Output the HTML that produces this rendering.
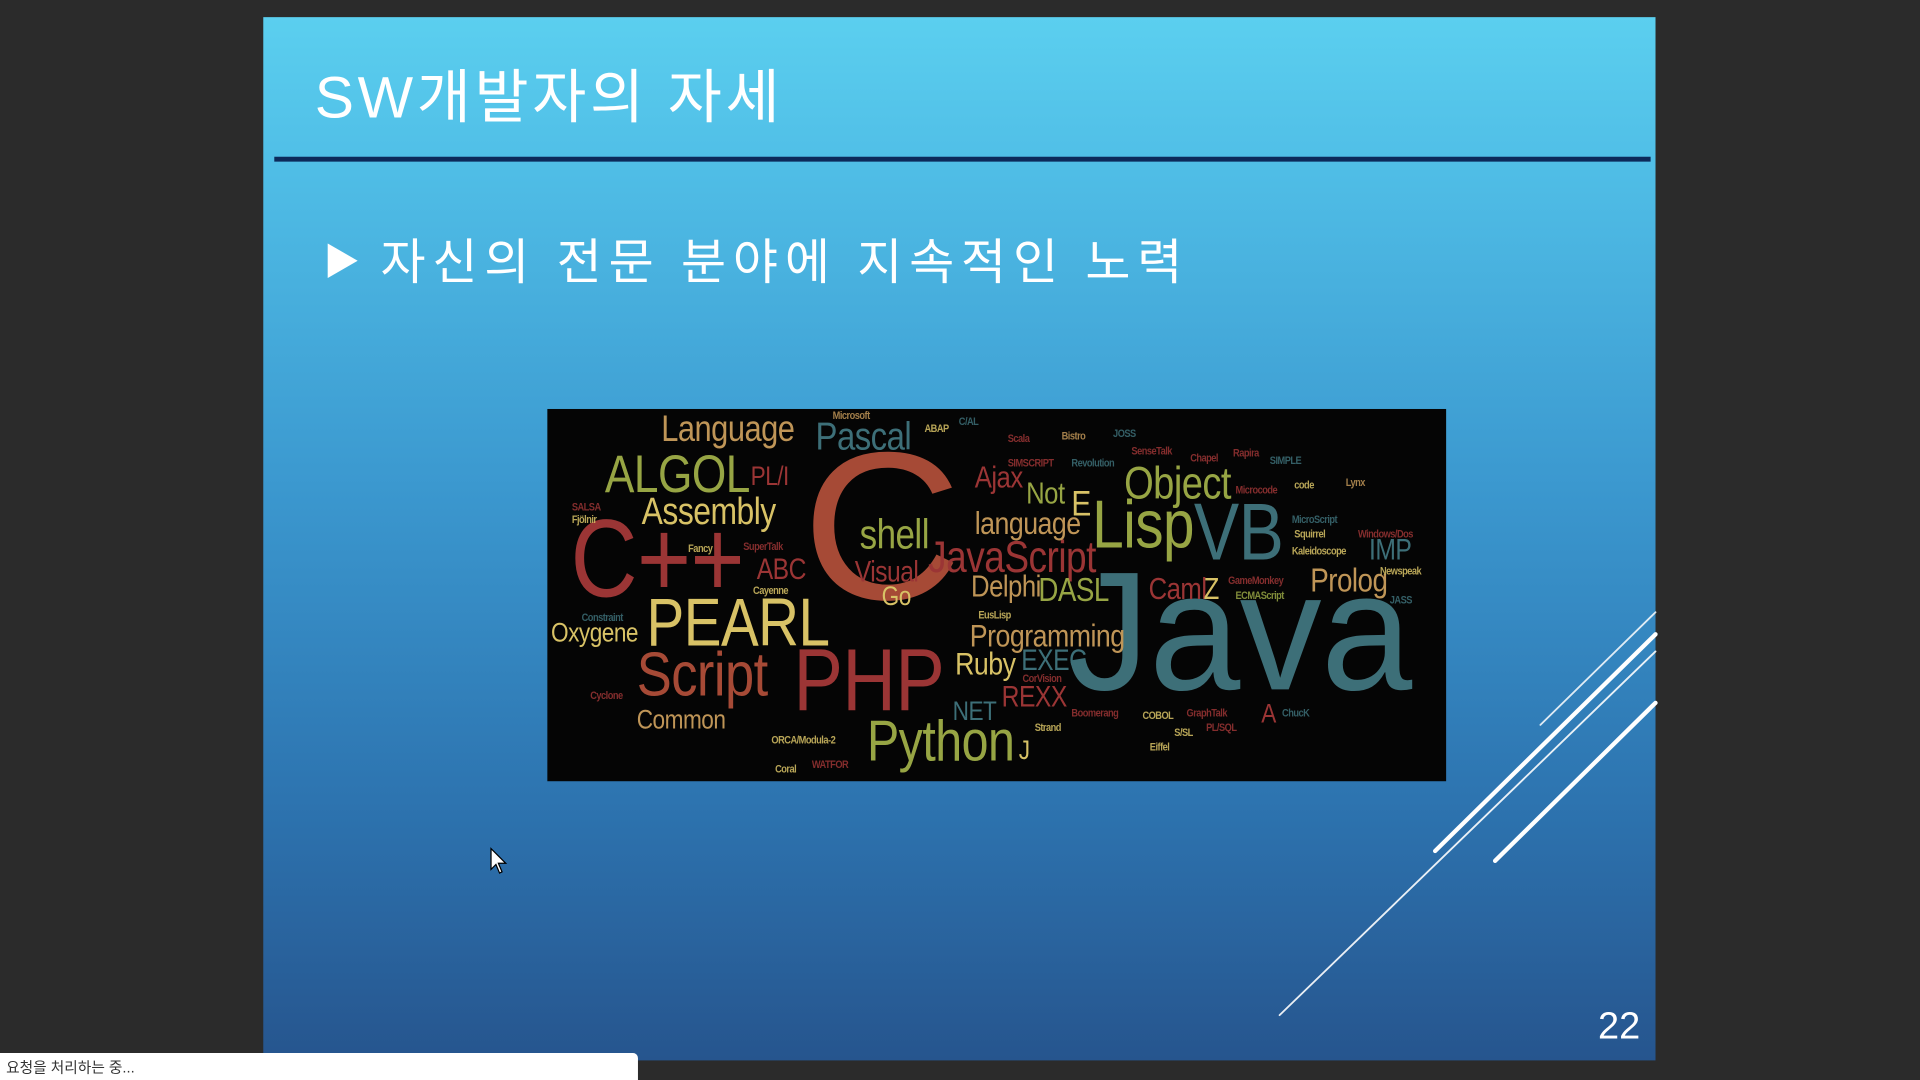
<!DOCTYPE html>
<html><head><meta charset="utf-8"><style>
html,body{margin:0;padding:0;background:#2b2b2b;overflow:hidden;width:1920px;height:1080px}
#s{position:absolute;left:0;top:0;width:1568px;height:882px;transform:scale(1.22449);transform-origin:0 0;font-family:"Liberation Sans","Noto Sans CJK KR",sans-serif}
.slide{position:absolute;left:215px;top:14px;width:1137px;height:852px;background:linear-gradient(180deg,#5bcfef 0%,#4fbde6 15%,#3b98cf 45%,#2d74b0 75%,#26558e 100%)}
.t{position:absolute;color:#fff;white-space:nowrap}
.img{position:absolute;left:447px;top:334px;width:734px;height:304px;background:#050505;overflow:hidden}
.w{position:absolute;line-height:1;white-space:nowrap;transform:scaleX(.84);transform-origin:0 0;letter-spacing:-0.5px}
.s{font-size:9px;font-weight:bold;opacity:.85}
.tan{color:#bf9557}.teal{color:#3d6f78}.ol{color:#97a544}.ye{color:#d8c266}.re{color:#9b3535}.ru{color:#a64a36}
</style></head><body><div id="s">
<div class="slide"></div>
<div class="t" style="left:257px;top:40px;font-size:48px;letter-spacing:3px">SW개발자의 자세</div>
<div style="position:absolute;left:224px;top:128px;width:1124px;height:4px;background:#0c2a5a"></div>
<div class="t" style="left:264px;top:182px;font-size:40px;letter-spacing:5.6px"><span style="font-size:30px;position:relative;top:-4px;letter-spacing:0">▶</span> 자신의 전문 분야에 지속적인 노력</div>
<div class="t" style="left:1305px;top:820px;font-size:31px">22</div>
<svg style="position:absolute;left:0;top:0" width="1568" height="882">
<g stroke="#fff" stroke-linecap="round">
<line x1="1258" y1="592" x2="1352" y2="500" stroke-width="1.5" opacity=".85"/>
<line x1="1172" y1="695" x2="1352" y2="518" stroke-width="3.5"/>
<line x1="1045" y1="829" x2="1352" y2="532" stroke-width="1.5" opacity=".9"/>
<line x1="1221" y1="703" x2="1352" y2="574" stroke-width="3.5"/>
</g>
<path d="M401 693 L401 710 L405 706 L408 713 L410 712 L407 705 L413 705 Z" fill="#fff" stroke="#000" stroke-width="1"/>
</svg>
<div class="img">
<div class="w tan" style="left:93px;top:2px;font-size:30px">Language</div>
<div class="w teal" style="left:219px;top:6px;font-size:32px">Pascal</div>
<div class="w ol" style="left:47px;top:33px;font-size:43px">ALGOL</div>
<div class="w ye" style="left:77px;top:68px;font-size:31px">Assembly</div>
<div class="w ru" style="left:208px;top:10px;font-size:172px;transform:scaleX(1.05)">C</div>
<div class="w re" style="left:19px;top:78px;font-size:90px">C++</div>
<div class="w ye" style="left:81px;top:147px;font-size:55px">PEARL</div>
<div class="w ye" style="left:3px;top:172px;font-size:22px">Oxygene</div>
<div class="w ru" style="left:73px;top:191px;font-size:51px">Script</div>
<div class="w re" style="left:201px;top:186px;font-size:72px">PHP</div>
<div class="w tan" style="left:73px;top:243px;font-size:22px">Common</div>
<div class="w ol" style="left:261px;top:247px;font-size:47px">Python</div>
<div class="w ol" style="left:255px;top:86px;font-size:34px">shell</div>
<div class="w re" style="left:311px;top:103px;font-size:36px">JavaScript</div>
<div class="w tan" style="left:349px;top:80px;font-size:26px">language</div>
<div class="w re" style="left:349px;top:44px;font-size:25px">Ajax</div>
<div class="w ol" style="left:391px;top:57px;font-size:25px">Not</div>
<div class="w ye" style="left:428px;top:64px;font-size:29px">E</div>
<div class="w ol" style="left:471px;top:42px;font-size:37px">Object</div>
<div class="w ol" style="left:445px;top:67px;font-size:55px">Lisp</div>
<div class="w teal" style="left:528px;top:67px;font-size:66px">VB</div>
<div class="w teal" style="left:425px;top:113px;font-size:138px;transform:scaleX(.97)">Java</div>
<div class="w tan" style="left:346px;top:133px;font-size:25px">Delphi</div>
<div class="w ol" style="left:401px;top:135px;font-size:27px">DASL</div>
<div class="w tan" style="left:345px;top:172px;font-size:26px">Programming</div>
<div class="w ye" style="left:333px;top:195px;font-size:26px">Ruby</div>
<div class="w teal" style="left:387px;top:194px;font-size:24px">EXEC</div>
<div class="w re" style="left:371px;top:224px;font-size:24px">REXX</div>
<div class="w teal" style="left:331px;top:236px;font-size:22px">NET</div>
<div class="w tan" style="left:623px;top:127px;font-size:27px">Prolog</div>
<div class="w teal" style="left:671px;top:104px;font-size:24px">IMP</div>
<div class="w re" style="left:491px;top:135px;font-size:25px">Caml</div>
<div class="w ye" style="left:536px;top:135px;font-size:25px">Z</div>
<div class="w re" style="left:171px;top:120px;font-size:24px">ABC</div>
<div class="w re" style="left:251px;top:122px;font-size:24px">Visual</div>
<div class="w ye" style="left:273px;top:142px;font-size:22px">Go</div>
<div class="w re" style="left:583px;top:238px;font-size:22px">A</div>
<div class="w ye" style="left:385px;top:268px;font-size:22px">J</div>
<div class="w re" style="left:166px;top:44px;font-size:22px">PL/I</div>
<div class="w s tan" style="left:233px;top:1px">Microsoft</div>
<div class="w s ye" style="left:308px;top:12px">ABAP</div>
<div class="w s teal" style="left:336px;top:6px">C/AL</div>
<div class="w s re" style="left:376px;top:20px">Scala</div>
<div class="w s tan" style="left:420px;top:18px">Bistro</div>
<div class="w s teal" style="left:462px;top:16px">JOSS</div>
<div class="w s re" style="left:477px;top:30px">SenseTalk</div>
<div class="w s re" style="left:376px;top:40px">SIMSCRIPT</div>
<div class="w s teal" style="left:428px;top:40px">Revolution</div>
<div class="w s re" style="left:525px;top:36px">Chapel</div>
<div class="w s re" style="left:560px;top:32px">Rapira</div>
<div class="w s teal" style="left:590px;top:38px">SIMPLE</div>
<div class="w s re" style="left:562px;top:62px">Microcode</div>
<div class="w s ye" style="left:610px;top:58px">code</div>
<div class="w s tan" style="left:652px;top:56px">Lynx</div>
<div class="w s teal" style="left:608px;top:86px">MicroScript</div>
<div class="w s ye" style="left:610px;top:98px">Squirrel</div>
<div class="w s ye" style="left:608px;top:112px">Kaleidoscope</div>
<div class="w s re" style="left:662px;top:98px">Windows/Dos</div>
<div class="w s ye" style="left:680px;top:128px">Newspeak</div>
<div class="w s re" style="left:556px;top:136px">GameMonkey</div>
<div class="w s ol" style="left:562px;top:148px">ECMAScript</div>
<div class="w s teal" style="left:688px;top:152px">JASS</div>
<div class="w s re" style="left:20px;top:76px">SALSA</div>
<div class="w s ye" style="left:20px;top:86px">Fjölnir</div>
<div class="w s re" style="left:160px;top:108px">SuperTalk</div>
<div class="w s ye" style="left:115px;top:110px">Fancy</div>
<div class="w s ye" style="left:168px;top:144px">Cayenne</div>
<div class="w s teal" style="left:28px;top:166px">Constraint</div>
<div class="w s re" style="left:35px;top:230px">Cyclone</div>
<div class="w s ye" style="left:352px;top:164px">EusLisp</div>
<div class="w s re" style="left:388px;top:216px">CorVision</div>
<div class="w s ye" style="left:183px;top:266px">ORCA/Modula-2</div>
<div class="w s ye" style="left:186px;top:290px">Coral</div>
<div class="w s re" style="left:216px;top:286px">WATFOR</div>
<div class="w s re" style="left:428px;top:244px">Boomerang</div>
<div class="w s ye" style="left:486px;top:246px">COBOL</div>
<div class="w s re" style="left:522px;top:244px">GraphTalk</div>
<div class="w s teal" style="left:600px;top:244px">ChucK</div>
<div class="w s ye" style="left:398px;top:256px">Strand</div>
<div class="w s ye" style="left:492px;top:272px">Eiffel</div>
<div class="w s ye" style="left:512px;top:260px">S/SL</div>
<div class="w s re" style="left:538px;top:256px">PL/SQL</div>
</div>
<div style="position:absolute;left:0;top:860px;width:521px;height:22px;background:#fff;border-radius:0 4px 0 0"></div>
<div style="position:absolute;left:5px;top:863px;font-size:12px;color:#333">요청을 처리하는 중...</div>
</div></body></html>
